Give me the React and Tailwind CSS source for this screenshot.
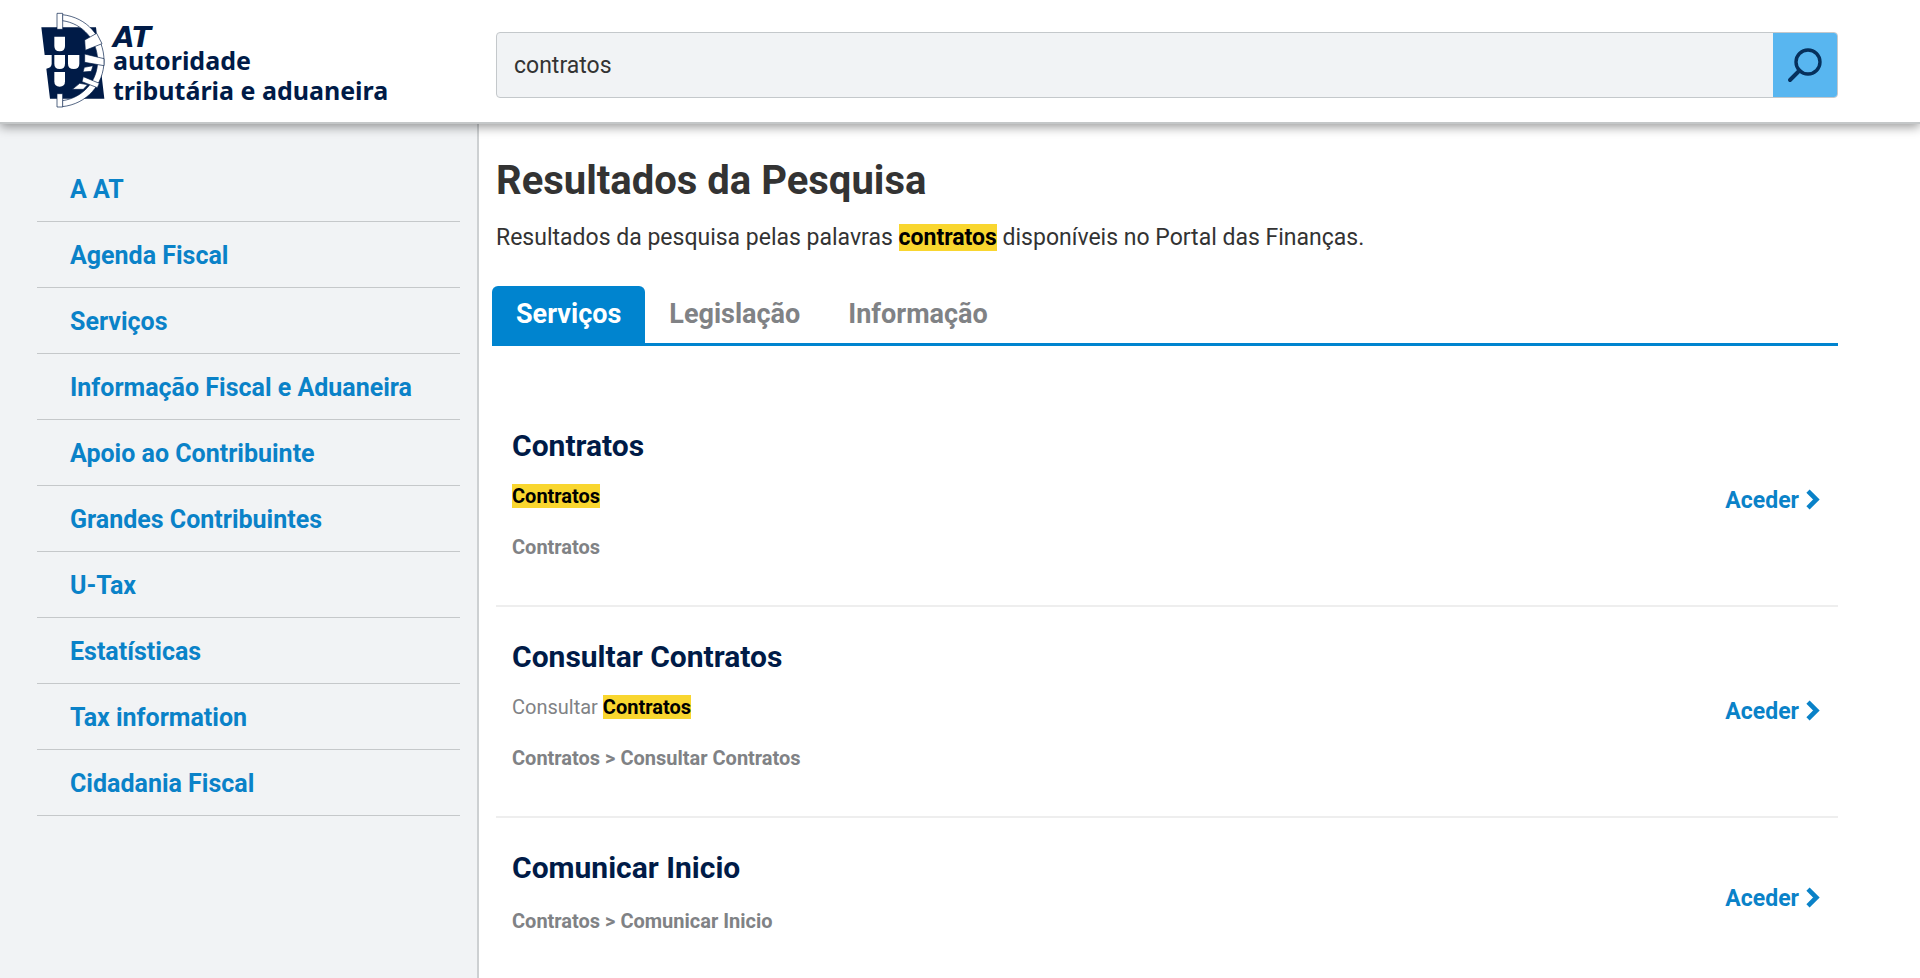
import { Fragment } from 'react'

const menu = [
  'A AT',
  'Agenda Fiscal',
  'Serviços',
  'Informação Fiscal e Aduaneira',
  'Apoio ao Contribuinte',
  'Grandes Contribuintes',
  'U-Tax',
  'Estatísticas',
  'Tax information',
  'Cidadania Fiscal',
]

const tabs = ['Serviços', 'Legislação', 'Informação']

const results = [
  { title: 'Contratos', description: 'Contratos', path: 'Contratos' },
  { title: 'Consultar Contratos', description: 'Consultar Contratos', path: 'Contratos > Consultar Contratos' },
  { title: 'Comunicar Inicio', path: 'Contratos > Comunicar Inicio' },
]

function Highlight({ text, term }) {
  const parts = text.split(new RegExp(`(${term})`, 'i'))
  return parts.map((part, i) => (
    <Fragment key={i}>
      {part.toLowerCase() === term ? <mark className="bg-[#f9d62f] font-bold text-black">{part}</mark> : part}
    </Fragment>
  ))
}

function Emblem() {
  return (
    <svg viewBox="60 38 198 288" className="h-24 w-[66px] shrink-0" aria-hidden="true">
      <path fill="#001b47" d="M64 84H228L253 298H90L79 208Q94 206 95 194V167H74Z" />
      <g fill="#fff">
        <path d="M103 112h32v28q0 16-16 16t-16-16z" />
        <path d="M103 167h32v26q0 16-16 16t-16-16z" />
        <path d="M144 167h34v26q0 16-17 16t-17-16z" />
        <path d="M103 218h32v28q0 16-16 16t-16-16z" />
      </g>
      {/* armillary ring */}
      <g fill="#fff" stroke="#001b47" strokeWidth="2">
        <path d="M127 46C200 54 252 112 252 184C252 256 200 314 127 322V304C188 296 233 246 233 184C233 124 188 72 127 64Z" />
        <path d="M111 42h17v48h-17zM111 283h17v40h-17z" />
        <path d="M194 122L230 102L246 133L196 153Z" />
        <path d="M194 164L252 178V199L194 189Z" />
        <path d="M193 204L219 199L214 216L189 218Z" />
        <path d="M190 232L238 252L232 265L186 247Z" />
        <path d="M179 252L203 256L190 270H157Z" />
      </g>
    </svg>
  )
}

function Logo() {
  return (
    <a href="#" className="flex items-center gap-[7px] text-[#001b47]">
      <Emblem />
      <span className="flex flex-col pt-4 font-['Noto_Sans',sans-serif] text-[25px] leading-[30px] font-bold">
        <span className="font-['DejaVu_Sans',sans-serif] text-[28px] leading-[14px] italic">AT</span>
        <span>autoridade</span>
        <span>tributária e aduaneira</span>
      </span>
    </a>
  )
}

function ResultItem({ title, description, path }) {
  return (
    <li className="flex items-center justify-between border-b-2 border-[#eeeeee] px-4 pt-[29px] pb-[30px] last:border-b-0 last:pb-7">
      <div className="pb-[13px] text-xl leading-[30px] text-[#808285]">
        <h2 className="text-[30px] leading-[42px] font-bold text-[#001b47]">{title}</h2>
        {description && (
          <p className="pt-3.5 pb-1">
            <Highlight text={description} term="contratos" />
          </p>
        )}
        <p className="pt-[17px] font-bold">{path}</p>
      </div>
      <a href="#" className="flex items-center gap-[7px] text-[23px] font-bold text-[#0a82c8]">
        <span className="pt-0.5">Aceder</span>
        <svg viewBox="0 0 16 22" className="h-[22px] w-4" fill="none" stroke="currentColor" strokeWidth="4.6" aria-hidden="true">
          <path d="M2 2.2L10.4 10.5L2 18.8" />
        </svg>
      </a>
    </li>
  )
}

export default function App() {
  return (
    <div className="flex min-h-screen flex-col bg-white font-['Roboto',sans-serif] text-[#333333]">
      <header className="relative z-10 flex items-center border-b-2 border-[#c4c7c8] bg-white pt-3 pr-[82px] pb-3.5 shadow-[0_3px_10px_rgba(0,0,0,0.4)]">
        <div className="w-[496px] shrink-0 pl-10">
          <Logo />
        </div>
        <form className="mt-2.5 flex h-[66px] flex-1 overflow-hidden rounded-sm border border-[#c4c8cb] bg-[#f1f3f5]" onSubmit={(e) => e.preventDefault()}>
          <input
            type="text"
            aria-label="Pesquisar"
            defaultValue="contratos"
            className="min-w-0 flex-1 bg-transparent px-[17px] pt-0.5 text-[23px] outline-none"
          />
          <button type="submit" aria-label="Pesquisar" className="flex w-16 items-center justify-center bg-[#58b6f0]">
            <svg viewBox="0 0 36 36" className="size-9" fill="none" stroke="#06305c" aria-hidden="true">
              <circle cx="21" cy="15" r="12" strokeWidth="3.4" />
              <path d="M12.5 23.5L3 33" strokeWidth="4" strokeLinecap="round" />
            </svg>
          </button>
        </form>
      </header>

      <div className="flex flex-1">
        <nav className="w-[479px] shrink-0 border-r-2 border-[#cdd0d2] bg-[#f1f3f5] pt-8 pr-[17px] pl-[37px]">
          <ul>
            {menu.map((item) => (
              <li key={item} className="border-b border-[#c5c8ca]">
                <a href="#" className="flex h-[65px] items-center pt-0.5 pl-[33px] text-[25px] font-bold text-[#0a82c8]">
                  {item}
                </a>
              </li>
            ))}
          </ul>
        </nav>

        <main className="flex-1 pt-[33px] pr-[82px] pl-[17px]">
          <h1 className="text-[40px] leading-[48px] font-bold">Resultados da Pesquisa</h1>
          <p className="mt-[17px] text-[23px] leading-8">
            Resultados da pesquisa pelas palavras <mark className="bg-[#f9d62f] font-bold text-black">contratos</mark> disponíveis no Portal das Finanças.
          </p>

          <div role="tablist" className="mt-8 -ml-1 flex border-b-[3px] border-[#0084cf]">
            {tabs.map((tab, i) => (
              <button
                key={tab}
                type="button"
                role="tab"
                aria-selected={i === 0}
                className="h-[57px] rounded-t-md px-6 text-[27px] font-bold text-[#808285] aria-selected:bg-[#0084cf] aria-selected:text-white"
              >
                {tab}
              </button>
            ))}
          </div>

          <ul className="mt-[50px]">
            {results.map((result) => (
              <ResultItem key={result.title} {...result} />
            ))}
          </ul>
        </main>
      </div>
    </div>
  )
}
